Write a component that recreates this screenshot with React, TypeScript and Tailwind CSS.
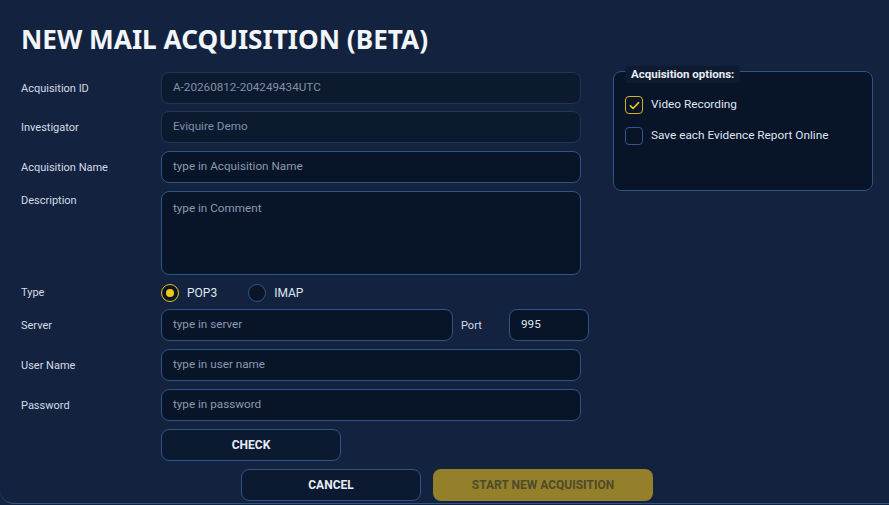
import { useState } from "react";

const font = { fontFamily: 'Roboto, "Noto Sans", sans-serif' };

function Label({ children, top = false }: { children: React.ReactNode; top?: boolean }) {
  return (
    <div className={`w-[140px] shrink-0 pt-[2px] text-[11px] text-[#d3dbe8] ${top ? "self-start" : ""}`}>
      {children}
    </div>
  );
}

function Field({
  value,
  placeholder,
  disabled,
  className = "",
}: {
  value?: string;
  placeholder?: string;
  disabled?: boolean;
  className?: string;
}) {
  return (
    <div
      className={`flex h-[32px] shrink-0 items-center rounded-[8px] border px-[11px] text-[11.7px] ${
        disabled
          ? "border-[#1f3656] bg-[#0c1a30] text-[#8190a6]"
          : "border-[#2f5484] bg-[#081428] text-[#8a9ab2]"
      } ${className}`}
    >
      {value ?? placeholder}
    </div>
  );
}

function Row({ label, children }: { label: string; children: React.ReactNode }) {
  return (
    <div className="flex items-center">
      <Label>{label}</Label>
      {children}
    </div>
  );
}

function Radio({ checked, label, onClick }: { checked: boolean; label: string; onClick: () => void }) {
  return (
    <button type="button" onClick={onClick} className="flex items-center gap-[8px]">
      <span
        className={`flex h-[18px] w-[18px] items-center justify-center rounded-full border-[1.5px] ${
          checked ? "border-[#e8c21a] bg-[#0a1628]" : "border-[#2f5484] bg-[#0a1628]"
        }`}
      >
        {checked && <span className="h-[8px] w-[8px] rounded-full bg-[#f2c814]" />}
      </span>
      <span className="text-[12px] text-[#dfe6f0]">{label}</span>
    </button>
  );
}

function Check({ checked, label, onClick }: { checked: boolean; label: string; onClick: () => void }) {
  return (
    <button type="button" onClick={onClick} className="flex items-center gap-[8px]">
      <span
        className={`flex h-[18px] w-[18px] items-center justify-center rounded-[4px] border-[1.5px] ${
          checked ? "border-[#d9b21c]" : "border-[#34557f]"
        }`}
      >
        {checked && (
          <svg viewBox="0 0 16 16" className="h-[13px] w-[13px]" fill="none" stroke="#f0c419" strokeWidth="2" strokeLinecap="round" strokeLinejoin="round">
            <path d="M3 8.5l3.2 3.2L13 4.5" />
          </svg>
        )}
      </span>
      <span className="text-[11.8px] text-[#dfe6f0]">{label}</span>
    </button>
  );
}

export default function App() {
  const [type, setType] = useState<"pop3" | "imap">("pop3");
  const [video, setVideo] = useState(true);
  const [online, setOnline] = useState(false);

  return (
    <div style={font} className="h-[505px] w-[889px] overflow-hidden bg-[#132440]">
      <div className="flex h-[504px] flex-col rounded-bl-[14px] border-b-[1.5px] border-[#2e5585] bg-[#13233f] pl-[21px]">
        <h1
          style={{ fontFamily: '"Noto Sans", sans-serif' }}
          className="mt-[22px] text-[26.2px] font-bold leading-[34px] text-[#f2f5fa]"
        >
          NEW MAIL ACQUISITION (BETA)
        </h1>

        <div className="mt-[16px] flex">
          <div className="flex w-[568px] shrink-0 flex-col gap-[8px]">
            <Row label="Acquisition ID">
              <Field value="A-20260812-204249434UTC" disabled className="w-[420px]" />
            </Row>
            <div className="-mt-[1px]">
              <Row label="Investigator">
                <Field value="Eviquire Demo" disabled className="w-[420px]" />
              </Row>
            </div>
            <Row label="Acquisition Name">
              <Field placeholder="type in Acquisition Name" className="w-[420px]" />
            </Row>
            <div className="flex">
              <Label top>Description</Label>
              <div className="h-[84px] w-[420px] shrink-0 rounded-[8px] border border-[#2f5484] bg-[#081428] px-[11px] pt-[8px] text-[11.7px] text-[#8a9ab2]">
                type in Comment
              </div>
            </div>
            <div className="flex h-[18px] items-center pt-[1px]">
              <Label>Type</Label>
              <div className="flex gap-[31px]">
                <Radio checked={type === "pop3"} label="POP3" onClick={() => setType("pop3")} />
                <Radio checked={type === "imap"} label="IMAP" onClick={() => setType("imap")} />
              </div>
            </div>
            <Row label="Server">
              <Field placeholder="type in server" className="w-[292px]" />
              <span className="ml-[8px] w-[48px] shrink-0 pt-[2px] text-[11px] text-[#d3dbe8]">Port</span>
              <Field value="995" className="w-[80px] text-[#dfe6f0]" />
            </Row>
            <Row label="User Name">
              <Field placeholder="type in user name" className="w-[420px]" />
            </Row>
            <Row label="Password">
              <Field placeholder="type in password" className="w-[420px]" />
            </Row>
            <div className="flex">
              <div className="w-[140px] shrink-0" />
              <button
                type="button"
                className="h-[32px] w-[180px] shrink-0 rounded-[8px] border border-[#2f5484] bg-[#0b1a31] text-[12px] font-bold text-[#e8edf5]"
              >
                CHECK
              </button>
            </div>
            <div className="flex gap-[12px] pl-[220px]">
              <button
                type="button"
                className="h-[32px] w-[180px] shrink-0 rounded-[8px] border border-[#2f5484] bg-[#0b1a31] text-[12px] font-bold text-[#e8edf5]"
              >
                CANCEL
              </button>
              <button
                type="button"
                className="h-[32px] w-[220px] shrink-0 rounded-[8px] bg-[#94802a] text-[12px] font-bold text-[#4f4a2a]"
              >
                START NEW ACQUISITION
              </button>
            </div>
          </div>

          <div className="ml-[24px] mt-[-1px]">
            <fieldset className="relative h-[120px] w-[260px] rounded-[8px] border border-[#2f5484] bg-[#081428] px-[11px] pt-[24px]">
              <span className="absolute left-[11px] top-[-6px] rounded-t-[4px] bg-[#0d1a2f] px-[6px] pb-[1px] text-[11.5px] font-bold leading-[16px] text-[#e8edf5]">
                Acquisition options:
              </span>
              <div className="flex flex-col gap-[13px]">
                <Check checked={video} label="Video Recording" onClick={() => setVideo(!video)} />
                <Check checked={online} label="Save each Evidence Report Online" onClick={() => setOnline(!online)} />
              </div>
            </fieldset>
          </div>
        </div>
      </div>
    </div>
  );
}
